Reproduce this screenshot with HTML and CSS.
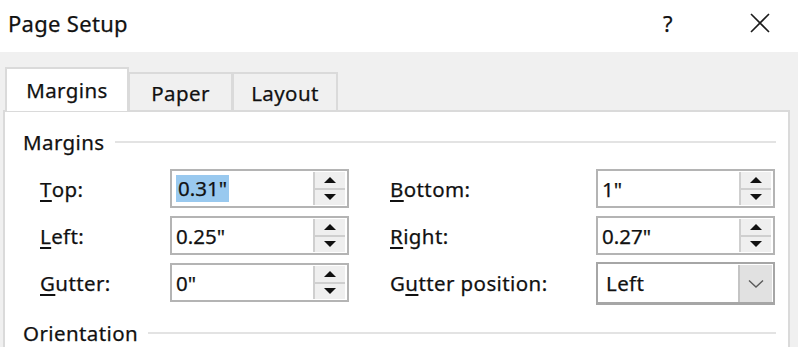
FILE: index.html
```html
<!DOCTYPE html>
<html lang="en">
<head>
    <meta charset="utf-8"/>
    <title>Page Setup</title>
    <link rel="stylesheet" href="styles.css">
</head>
<body>
    <div class="titlebar">
        <span class="title">Page Setup</span>
        <span class="help">?</span>
        <span class="close">
            <svg width="20" height="20" viewBox="0 0 20 20">
                <path d="M1 1 L19 19 M19 1 L1 19" stroke="#1b1b1b" stroke-width="1.6" fill="none"/>
            </svg>
        </span>
    </div>

    <div class="dialog">
        <div class="tabs">
            <div class="tab active">Margins</div>
            <div class="tab">Paper</div>
            <div class="tab">Layout</div>
        </div>

        <div class="panel">
            <div class="group">
                <span class="group-label">Margins</span>
                <span class="group-line"></span>
            </div>

            <div class="fields">
                <label class="label"><u>T</u>op:</label>
                <div class="box">
                    <span class="value"><span class="selected">0.31"</span></span>
                    <span class="spin"><span class="up"></span><span class="down"></span></span>
                </div>
                <span></span>
                <label class="label"><u>B</u>ottom:</label>
                <div class="box">
                    <span class="value">1"</span>
                    <span class="spin"><span class="up"></span><span class="down"></span></span>
                </div>

                <label class="label"><u>L</u>eft:</label>
                <div class="box">
                    <span class="value">0.25"</span>
                    <span class="spin"><span class="up"></span><span class="down"></span></span>
                </div>
                <span></span>
                <label class="label"><u>R</u>ight:</label>
                <div class="box">
                    <span class="value">0.27"</span>
                    <span class="spin"><span class="up"></span><span class="down"></span></span>
                </div>

                <label class="label"><u>G</u>utter:</label>
                <div class="box">
                    <span class="value">0"</span>
                    <span class="spin"><span class="up"></span><span class="down"></span></span>
                </div>
                <span></span>
                <label class="label">G<u>u</u>tter position:</label>
                <div class="box select">
                    <span class="value">Left</span>
                    <span class="drop">
                        <svg width="16" height="10" viewBox="0 0 16 10">
                            <path d="M1 1.5 L8 8 L15 1.5" stroke="#5a5a5a" stroke-width="1.4" fill="none"/>
                        </svg>
                    </span>
                </div>
            </div>

            <div class="group orientation">
                <span class="group-label">Orientation</span>
                <span class="group-line"></span>
            </div>
        </div>
    </div>
</body>
</html>
```

FILE: styles.css
```css
body {
    margin: 0;
    width: 798px;
    height: 347px;
    overflow: hidden;
    background: #f0f0f0;
    color: #111111;
    font-family: 'Noto Sans', 'Open Sans', sans-serif;
    font-size: 20.5px;
    letter-spacing: 0.4px;
    -webkit-text-stroke: 0.25px #111111;
}

.titlebar {
    height: 52px;
    background: #ffffff;
    display: flex;
    align-items: center;
}

.title {
    font-size: 22px;
    padding-left: 8px;
    flex: 1;
    margin-top: -6px;
    letter-spacing: 0.3px;
}

.help {
    font-size: 22px;
    width: 30px;
    margin-top: -6px;
}

.close {
    width: 20px;
    margin: -6px 28px 0 57px;
    display: flex;
}

.dialog {
    padding: 15px 8px 0 3px;
}

.tabs {
    display: flex;
    align-items: flex-end;
    padding-left: 2px;
    height: 43px;
}

.tab {
    height: 38px;
    box-sizing: border-box;
    border: 2px solid #dadada;
    border-bottom: none;
    background: #f0f0f0;
    display: flex;
    align-items: center;
    justify-content: center;
    padding-top: 2px;
}

.tab:nth-child(2) {
    width: 105px;
    margin-left: -1px;
}

.tab:nth-child(3) {
    width: 106px;
    margin-left: -1px;
}

.tab.active {
    width: 124px;
    height: 44px;
    background: #ffffff;
    position: relative;
    z-index: 1;
    margin-bottom: -1px;
    padding-top: 0;
}

.panel {
    background: #ffffff;
    border: 2px solid #dadada;
    border-bottom: none;
    box-sizing: border-box;
    height: 237px;
    padding: 18px 12px 0 18px;
}

.group {
    display: flex;
    align-items: center;
    gap: 10px;
    height: 24px;
}

.group-line {
    flex: 1;
    height: 2px;
    background: #e3e3e3;
}

.fields {
    display: grid;
    grid-template-columns: 130px 179px 41px 206px 179px;
    grid-template-rows: 39px 39px 43px;
    row-gap: 8px;
    align-items: start;
    padding-left: 17px;
    margin-top: 15px;
}

.label {
    height: 39px;
    display: flex;
    align-items: center;
}

.label u {
    text-underline-offset: 3px;
    text-decoration-thickness: 1.5px;
}

.box {
    height: 39px;
    box-sizing: border-box;
    border: 2px solid #b4b4b4;
    background: #ffffff;
    display: flex;
    align-items: stretch;
    letter-spacing: 0;
}

.value {
    flex: 1;
    display: flex;
    align-items: center;
    padding-left: 4px;
}

.selected {
    background: #99c9ef;
    padding: 0 2px;
    line-height: 27px;
}

.spin {
    width: 30px;
    margin: 1px 2px 1px 0;
    display: flex;
    flex-direction: column;
    border-left: 2px solid #cfcfcf;
    background: #efefef;
}

.up,
.down {
    flex: 1;
    display: flex;
    align-items: center;
    justify-content: center;
}

.up {
    border-bottom: 2px solid #cfcfcf;
}

.up::before {
    content: "";
    border-left: 6px solid transparent;
    border-right: 6px solid transparent;
    border-bottom: 6px solid #111111;
}

.down::before {
    content: "";
    border-left: 6px solid transparent;
    border-right: 6px solid transparent;
    border-top: 6px solid #111111;
}

.select {
    height: 43px;
    margin-top: -1px;
    border-color: #a6a6a6;
    border-bottom-width: 3px;
}

.select .value {
    padding-left: 8px;
    letter-spacing: 0.4px;
}

.drop {
    width: 32px;
    margin: 1px 1px 0 0;
    background: #e1e1e1;
    border-left: 2px solid #c4c4c4;
    display: flex;
    align-items: center;
    justify-content: center;
}

.orientation {
    margin-top: 15px;
}
```
